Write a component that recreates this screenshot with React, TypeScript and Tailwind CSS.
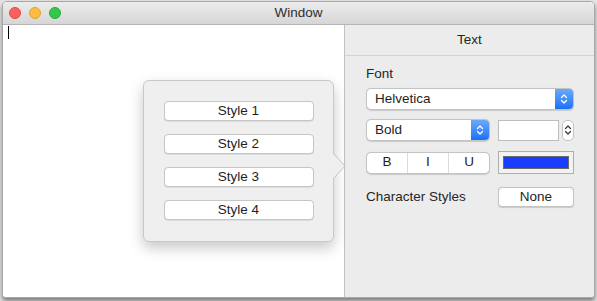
import React from "react";

function Chevrons({ color = "white" }: { color?: string }) {
  return (
    <svg width="8" height="12" viewBox="0 0 8 12" fill="none" stroke={color} strokeWidth="1.3" strokeLinecap="round" strokeLinejoin="round">
      <path d="M1.5 4.5 L4 2 L6.5 4.5" />
      <path d="M1.5 7.5 L4 10 L6.5 7.5" />
    </svg>
  );
}

function StyleButton({ label }: { label: string }) {
  return (
    <div className="w-[150px] h-[20px] bg-white rounded-[4px] border border-[#c6c6c6] shadow-[0_0.5px_0.5px_rgba(0,0,0,0.15)] flex items-center justify-center text-[13.5px] text-[#1e1e1e]">
      {label}
    </div>
  );
}

export default function App() {
  return (
    <div
      className="w-[597px] h-[301px] bg-[#e4e4e4] pt-[1px] pl-[2px] overflow-hidden"
      style={{ fontFamily: '"Liberation Sans", Arial, sans-serif' }}
    >
      <div className="relative w-[593px] h-[297px] rounded-t-[5px] rounded-b-[4px] border border-[#a9a9a9] bg-white shadow-[0_3px_4px_rgba(0,0,0,0.45)] flex flex-col overflow-hidden">
        {/* Title bar */}
        <div className="h-[23px] shrink-0 bg-gradient-to-b from-[#ececec] to-[#d6d6d6] border-b border-[#b4b4b4] flex items-center relative">
          <div className="flex items-center gap-[8px] pl-[6px]">
            <div className="w-[12px] h-[12px] rounded-full bg-[#fc605c] border border-[#de4a45]" />
            <div className="w-[12px] h-[12px] rounded-full bg-[#fdbc40] border border-[#dea236]" />
            <div className="w-[12px] h-[12px] rounded-full bg-[#34c84a] border border-[#27aa35]" />
          </div>
          <div className="absolute inset-0 flex items-center justify-center text-[13.5px] text-[#2e2e2e] pointer-events-none">
            Window
          </div>
        </div>
        {/* Content */}
        <div className="flex flex-1 relative">
          <div className="w-[342px] bg-white border-r border-[#c2c2c2] relative">
            <div className="absolute left-[5px] top-[1px] w-[1px] h-[13px] bg-black" />
          </div>
          <div className="flex-1 bg-[#ececec] flex flex-col">
            <div className="h-[31px] border-b border-[#d3d3d3] flex items-center justify-center text-[13.5px] text-[#262626]">
              Text
            </div>
            <div className="pl-[21px] pr-[20px] flex flex-col">
              <div className="mt-[10px] text-[13.5px] text-[#262626] leading-[15px]">Font</div>
              {/* Helvetica popup */}
              <div className="mt-[7px] h-[22px] w-[208px] bg-white rounded-[5px] border border-[#c4c4c4] shadow-[0_0.5px_1px_rgba(0,0,0,0.15)] flex items-center overflow-hidden">
                <span className="pl-[8px] flex-1 text-[13.5px] text-[#1e1e1e]">Helvetica</span>
                <div className="w-[18px] h-full bg-gradient-to-b from-[#69a9fb] to-[#1871f6] flex items-center justify-center">
                  <Chevrons />
                </div>
              </div>
              {/* Row 2 */}
              <div className="mt-[9px] flex items-center">
                <div className="h-[22px] w-[124px] bg-white rounded-[5px] border border-[#c4c4c4] shadow-[0_0.5px_1px_rgba(0,0,0,0.15)] flex items-center overflow-hidden">
                  <span className="pl-[8px] flex-1 text-[13.5px] text-[#1e1e1e]">Bold</span>
                  <div className="w-[18px] h-full bg-gradient-to-b from-[#69a9fb] to-[#1871f6] flex items-center justify-center">
                    <Chevrons />
                  </div>
                </div>
                <div className="ml-[8px] h-[21px] w-[61px] bg-white border border-[#bdbdbd]" />
                <div className="ml-[3px] h-[21px] w-[12px] bg-white rounded-[5px] border border-[#c4c4c4] flex items-center justify-center">
                  <Chevrons color="#3a3a3a" />
                </div>
              </div>
              {/* Row 3 */}
              <div className="mt-[10px] flex items-center">
                <div className="h-[22px] w-[124px] bg-white rounded-[5px] border border-[#c4c4c4] shadow-[0_0.5px_1px_rgba(0,0,0,0.15)] flex text-[13.5px] text-[#1e1e1e]">
                  <div className="flex-1 flex items-center justify-center border-r border-[#dcdcdc]">B</div>
                  <div className="flex-1 flex items-center justify-center border-r border-[#dcdcdc]">I</div>
                  <div className="flex-1 flex items-center justify-center">U</div>
                </div>
                <div className="ml-[8px] h-[23px] w-[76px] bg-[#f2f2f2] border border-[#adadad] flex items-center justify-center">
                  <div className="w-[66px] h-[13px] bg-[#1a3dfd] border border-[#6a6a6a]" />
                </div>
              </div>
              {/* Row 4 */}
              <div className="mt-[13px] flex items-center">
                <span className="w-[132px] text-[13.5px] text-[#262626]">Character Styles</span>
                <div className="h-[20px] w-[76px] bg-white rounded-[4px] border border-[#c4c4c4] shadow-[0_0.5px_1px_rgba(0,0,0,0.15)] flex items-center justify-center text-[13.5px] text-[#1e1e1e]">
                  None
                </div>
              </div>
            </div>
          </div>
          {/* Popover */}
          <div className="absolute left-[140px] top-[55px] w-[191px] h-[162px] bg-[#efefef] rounded-[6px] border border-[#c8c8c8] shadow-[0_6px_14px_rgba(0,0,0,0.22)] flex flex-col items-center pt-[20px] gap-[13px]">
            <StyleButton label="Style 1" />
            <StyleButton label="Style 2" />
            <StyleButton label="Style 3" />
            <StyleButton label="Style 4" />
            <svg className="absolute left-[189px] top-[72px]" width="14" height="26" viewBox="0 0 14 26">
              <path d="M0 0 L12 13 L0 26 Z" fill="#efefef" />
              <path d="M0 0 L12 13 L0 26" fill="none" stroke="#c2c2c2" strokeWidth="1" />
            </svg>
          </div>
        </div>
      </div>
    </div>
  );
}
